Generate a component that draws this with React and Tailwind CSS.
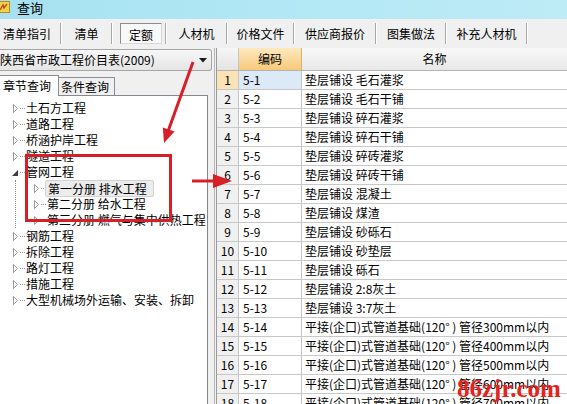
import React from "react";

const tabs = [
  { label: "清单指引", w: "w-[60px]", first: true },
  { label: "清单", w: "w-[49px]" },
  { label: "定额", w: "w-[52px]", selected: true },
  { label: "人材机", w: "w-[59px]" },
  { label: "价格文件", w: "w-[65px]" },
  { label: "供应商报价", w: "w-[80px]" },
  { label: "图集做法", w: "w-[68px]" },
  { label: "补充人材机", w: "w-[79px]" },
];

const pipe = "平接(企口)式管道基础(120° ) 管径";
const rows = [
  ["1", "5-1", "垫层铺设 毛石灌浆"],
  ["2", "5-2", "垫层铺设 毛石干铺"],
  ["3", "5-3", "垫层铺设 碎石灌浆"],
  ["4", "5-4", "垫层铺设 碎石干铺"],
  ["5", "5-5", "垫层铺设 碎砖灌浆"],
  ["6", "5-6", "垫层铺设 碎砖干铺"],
  ["7", "5-7", "垫层铺设 混凝土"],
  ["8", "5-8", "垫层铺设 煤渣"],
  ["9", "5-9", "垫层铺设 砂砾石"],
  ["10", "5-10", "垫层铺设 砂垫层"],
  ["11", "5-11", "垫层铺设 砾石"],
  ["12", "5-12", "垫层铺设 2:8灰土"],
  ["13", "5-13", "垫层铺设 3:7灰土"],
  ["14", "5-14", pipe + "300mm以内"],
  ["15", "5-15", pipe + "400mm以内"],
  ["16", "5-16", pipe + "500mm以内"],
  ["17", "5-17", pipe + "600mm以内"],
  ["18", "5-18", pipe + "700mm以内"],
];

function Tri({ open }) {
  if (open) {
    return (
      <svg width="7" height="9" viewBox="0 0 7 9" className="shrink-0">
        <polygon points="6,2 6,8 0,8" fill="#3c3c3c" />
      </svg>
    );
  }
  return (
    <svg width="7" height="9" viewBox="0 0 7 9" className="shrink-0">
      <polygon points="1.5,0.5 5.5,4.5 1.5,8.5" fill="white" stroke="#9a9a9a" strokeWidth="1" />
    </svg>
  );
}

function Item({ label, open, selected }) {
  return (
    <div className="flex items-center h-[16px] whitespace-nowrap">
      <Tri open={open} />
      <span className="w-[5px] mx-[1px] border-t border-dotted border-[#9a9a9a]" />
      <span
        className={
          selected
            ? "leading-[15px] px-[2px] -ml-[2px] border border-[#d2d2d2] bg-[#ececec] rounded-[2px] pr-[6px] whitespace-pre"
            : "leading-[16px] whitespace-pre"
        }
      >
        {label}
      </span>
    </div>
  );
}

export default function App() {
  return (
    <div className="relative w-[567px] h-[404px] overflow-hidden bg-[#f0f0f0] text-[12px] text-black font-['Noto_Sans_CJK_SC',sans-serif]">
      {/* title bar */}
      <div className="h-[19px] flex items-start bg-gradient-to-r from-[#a6e1f1] via-[#b2e8f5] to-[#bdebf6]">
        <div className="ml-[-3px] mt-[1px] w-[13px] h-[12px] bg-[#f3d24a] border border-[#b98a1c] flex items-center justify-center">
          <svg width="9" height="9" viewBox="0 0 9 9">
            <path d="M1 7 L4 2 L5 5 L8 1" stroke="#c4461a" strokeWidth="1.4" fill="none" />
          </svg>
        </div>
        <span className="ml-[7px] text-[13px] leading-[15px]">查询</span>
      </div>

      {/* tab bar */}
      <div className="h-[29px] flex items-center">
        {tabs.map((t) => (
          <React.Fragment key={t.label}>
            <div className={`${t.w} h-[21px] flex items-center ${t.first ? "pl-[3px]" : "justify-center"}`}>
              {t.selected ? (
                <div className="w-[42px] h-[21px] flex items-center justify-center border border-[#8c8c8c] border-r-[#d8d8d8] border-b-[#d8d8d8] bg-[#f8f8f8] ml-[4px]">
                  <span className="mt-[2px]">{t.label}</span>
                </div>
              ) : (
                <span>{t.label}</span>
              )}
            </div>
            <div className="w-[2px] h-[21px] border-l border-[#a8a8a8] border-r border-r-white" />
          </React.Fragment>
        ))}
      </div>

      {/* body */}
      <div className="flex">
        {/* left column */}
        <div className="w-[212px] flex flex-col">
          <div className="mt-[1px] h-[22px] flex items-center justify-between rounded-r-[3px] border border-l-0 border-[#a6a6a6] bg-gradient-to-b from-[#f7f7f7] to-[#e5e5e5]">
            <span className="whitespace-nowrap">陕西省市政工程价目表(2009)</span>
            <svg width="8" height="5" viewBox="0 0 8 5" className="mr-[4px]">
              <polygon points="0,0 8,0 4,4.5" fill="#1a1a1a" />
            </svg>
          </div>
          <div className="flex items-end h-[23px] mt-[1px]">
            <div className="w-[59px] h-[21px] flex items-center pl-[3px] bg-white border border-b-0 border-l-0 border-[#8a8d95] relative z-10 -mb-[1px]">
              章节查询
            </div>
            <div className="w-[56px] h-[18px] flex items-center pl-[2px] bg-[#f0f0f0] border border-b-0 border-l-0 border-[#8a8d95]">
              条件查询
            </div>
          </div>
          <div className="w-[208px] h-[320px] bg-white border-t border-r border-[#828790] pt-[4px] pl-[12px]">
            <Item label="土石方工程" />
            <Item label="道路工程" />
            <Item label="桥涵护岸工程" />
            <Item label="隧道工程" />
            <Item label="管网工程" open />
            <div className="ml-[3px] border-l border-dotted border-[#8a8a8a] pl-[17px]">
              <Item label="第一分册 排水工程" selected />
              <Item label="第二分册 给水工程" />
              <Item label="第三分册 燃气与集中供热工程" />
            </div>
            <Item label="钢筋工程" />
            <Item label="拆除工程" />
            <Item label="路灯工程" />
            <Item label="措施工程" />
            <Item label="大型机械场外运输、安装、拆卸" />
          </div>
        </div>

        {/* splitter */}
        <div className="w-[3px] mr-[1px] border-r border-[#b8b8b8]" />

        {/* grid */}
        <div className="flex-1 flex flex-col border-l border-[#9a9a9a]">
          <div className="flex h-[23px] border-b border-[#b4b4b4]">
            <div className="w-[22px] bg-gradient-to-b from-[#f6f6f6] to-[#e4e4e4] border-r border-[#c4c4c4]" />
            <div className="w-[63px] flex items-center justify-center bg-gradient-to-b from-[#fde9bf] to-[#f6c978] border-r border-[#d8b070]">
              编码
            </div>
            <div className="flex-1 flex items-center justify-center bg-gradient-to-b from-[#f8f8f8] to-[#e8e8e8]">
              名称
            </div>
          </div>
          {rows.map((r, i) => (
            <div key={r[0]} className="flex h-[19px] border-b border-[#c8c8c8] bg-white shrink-0">
              <div
                className={`w-[22px] flex items-center justify-center border-r border-[#c4c4c4] ${
                  i === 0 ? "bg-[#fbe3b6]" : "bg-[#f0f0f0]"
                }`}
              >
                {r[0]}
              </div>
              <div
                className={`w-[63px] flex items-center pl-[4px] border-r border-[#c4c4c4] ${
                  i === 0 ? "bg-[#dce9f6]" : ""
                }`}
              >
                {r[1]}
              </div>
              <div className="flex-1 flex items-center pl-[3px] whitespace-nowrap overflow-hidden">{r[2]}</div>
            </div>
          ))}
        </div>
      </div>

      {/* annotations overlay */}
      <svg className="absolute left-0 top-0 pointer-events-none" width="567" height="404" viewBox="0 0 567 404">
        <rect x="26.5" y="155.5" width="144" height="65" fill="none" stroke="#d61f27" strokeWidth="3" />
        <line x1="193" y1="62" x2="168.5" y2="130" stroke="#d61f27" strokeWidth="3" />
        <polygon points="164,143 174.5,131.5 162.8,127.5" fill="#d61f27" />
        <line x1="192" y1="181" x2="216" y2="181" stroke="#d61f27" strokeWidth="3" />
        <polygon points="213,174 232,181 213,188" fill="#d61f27" />
      </svg>

      {/* watermark */}
      <div className="absolute left-[457px] top-[374px] text-[25px] font-bold leading-[30px] text-[#e5221c] font-['Liberation_Serif',serif] whitespace-nowrap pointer-events-none">
        86zjr.com
      </div>
    </div>
  );
}
